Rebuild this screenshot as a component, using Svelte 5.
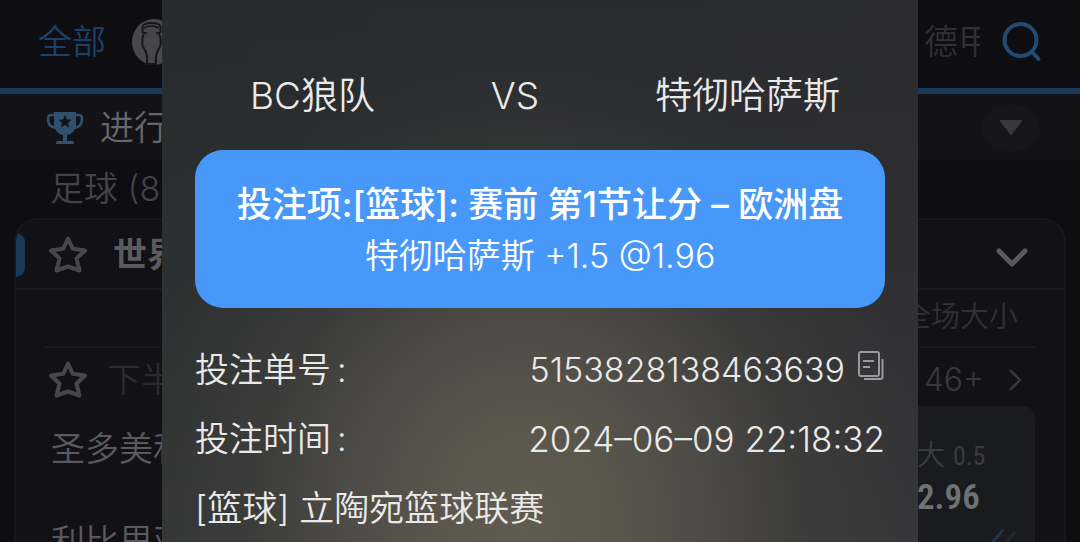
<script>
  const sports = ['全部'];
  const teams = ['BC狼队', 'VS', '特彻哈萨斯'];
  const matchTeams = ['圣多美和', '利比里亚'];
</script>

{#snippet star()}
  <svg class="star" viewBox="0 0 42 42" aria-hidden="true">
    <path d="M21 4.500L25.800 14.800L38 16.500L29.500 24.500L32.500 36.500L21 32.500L9.500 36.500L12.500 24.500L4 16.500L16.200 14.800Z" />
  </svg>
{/snippet}

<main>
  <nav>
    {#each sports as name}
      <a class="tab active" href="#all">{name}</a>
    {/each}
    <a class="cup" href="#euro" aria-label="Euro">
      <svg viewBox="0 0 46 46">
        <ellipse cx="22" cy="23" rx="22" ry="23" fill="#48474c" />
        <path d="M12 14L10.500 13V8Q11 4 19.500 4Q28 4 28.500 8V13L27 14Q30 22 28 28Q23 34 24 45H15Q16 34 11 28Q9 22 12 14Z" fill="#46454c" stroke="#16161b" stroke-width="2" />
        <path d="M12 9Q19.500 5 27 9M12 14H15M24 14H27" fill="none" stroke="#16161b" stroke-width="1.500" />
      </svg>
    </a>
    <a class="tab league" href="#bundesliga">德甲</a>
    <button class="search" aria-label="搜索">
      <svg viewBox="0 0 40 40"><circle cx="18.500" cy="18" r="16" /><path d="M29.500 29.500L36.500 37" /></svg>
    </button>
  </nav>

  <section class="live">
    <svg class="trophy" viewBox="0 0 38 36" aria-hidden="true">
      <path d="M10 5H5Q2 5 2 9Q2 18 12 18M28 5H33Q36 5 36 9Q36 18 26 18" fill="none" stroke="#30506e" stroke-width="2.500" />
      <path d="M8 2H30V14Q30 23 21 25V31H27Q28 31 28 34H10Q10 31 11 31H17V25Q8 23 8 14Z" fill="#30506e" />
      <path d="M19 5L20.900 9.500L25.500 9.800L22 13L23.200 17.500L19 15L14.800 17.500L16 13L12.500 9.800L17.100 9.500Z" fill="#121217" />
    </svg>
    <span>进行</span>
    <button class="fold" aria-label="收起">
      <svg viewBox="0 0 24 18"><path d="M2 2H22L12 15Z" /></svg>
    </button>
  </section>

  <h2>足球 (8</h2>

  <article>
    <header>
      <i></i>
      {@render star()}
      <b>世界</b>
      <button class="chevron" aria-label="展开">
        <svg viewBox="0 0 32 20"><path d="M3 3L16 16L29 3" /></svg>
      </button>
    </header>
    <div class="columns">全场大小</div>
    <div class="match">
      {@render star()}
      <span>下半</span>
      <a href="#more">46+
        <svg viewBox="0 0 14 24"><path d="M2 2L12 12L2 22" /></svg>
      </a>
    </div>
    <div class="odds-row">
      <div class="names">
        {#each matchTeams as team}<span>{team}</span>{/each}
      </div>
      <button class="odds">
        <span>大 <em>0.5</em></span>
        <strong>2.96</strong>
        <svg viewBox="0 0 28 16"><path d="M2 15L14 1" stroke="#1d344d" /><path d="M17 14L26 3" stroke="#20272f" /></svg>
      </button>
    </div>
  </article>

  <div class="slip" role="dialog" aria-label="投注单">
    <div class="versus">
      {#each teams as team}<span>{team}</span>{/each}
    </div>
    <div class="pick">
      <strong>投注项:[篮球]: 赛前 第1节让分 – 欧洲盘</strong>
      <span>特彻哈萨斯 +1.5 @1.96</span>
    </div>
    <dl>
      <div>
        <dt>投注单号<span class="colon">:</span></dt>
        <dd>
          5153828138463639
          <button class="copy" aria-label="复制">
            <svg viewBox="0 0 28 32">
              <rect x="2" y="2" width="20" height="24" rx="2" />
              <path d="M6 11H17M6 17H13M25.500 9V27Q25.500 29 23 29H7" />
            </svg>
          </button>
        </dd>
      </div>
      <div>
        <dt>投注时间<span class="colon">:</span></dt>
        <dd class="time">2024–06–09 22:18:32</dd>
      </div>
    </dl>
    <p>[篮球] 立陶宛篮球联赛</p>
  </div>
</main>

<style>
  :global(body) { margin: 0; background: #0d0d12; }
  * { box-sizing: border-box; }
  main {
    position: relative;
    height: 100vh;
    overflow: hidden;
    background: #0d0d12;
    color: #555559;
    font-family: Inter, "Noto Sans CJK SC", sans-serif;
    font-size: 34px;
    font-weight: 350;
    line-height: 50px;
    white-space: nowrap;
  }
  a { color: inherit; text-decoration: none; }
  button { padding: 0; border: 0; background: none; color: inherit; font: inherit; }
  svg { display: block; flex: none; }

  nav {
    display: flex;
    align-items: center;
    height: 94px;
    padding: 0 38px 4px;
    border-bottom: 6px solid #1b3a59;
  }
  .active { color: #1c4066; }
  .cup { margin-left: 26px; }
  .cup svg { width: 46px; height: 46px; }
  .league { width: 56px; margin-left: auto; overflow: hidden; color: #303035; }
  .search { margin-left: 22px; }
  .search svg { width: 40px; height: 40px; fill: none; stroke: #224b74; stroke-width: 4; stroke-linecap: round; }

  .live {
    display: flex;
    align-items: center;
    gap: 16px;
    height: 66px;
    padding: 2px 40px 0 46px;
    background: #121217;
    color: #66666a;
  }
  .trophy { width: 38px; height: 36px; }
  .fold {
    display: grid;
    place-items: center;
    width: 58px;
    height: 46px;
    margin-left: auto;
    border-radius: 23px;
    background: #15151a;
  }
  .fold svg { width: 24px; height: 18px; fill: #38383c; stroke: #38383c; stroke-width: 2; stroke-linejoin: round; }
  h2 { height: 58px; margin: 0; padding-left: 50px; font: inherit; line-height: 58px; color: #434347; }

  article {
    height: 400px;
    margin: 0 14px;
    overflow: hidden;
    border: 2px solid #17171c;
    border-radius: 24px;
    background: #111116;
  }
  header {
    display: flex;
    align-items: center;
    height: 70px;
    padding: 2px 36px 0 0;
    border-bottom: 2px solid #19191e;
  }
  i { width: 9px; height: 44px; border-radius: 0 10px 10px 0; background: #183957; }
  .star { width: 42px; height: 42px; fill: none; stroke: #47474b; stroke-width: 4; stroke-linejoin: round; }
  header .star { margin-left: 22px; }
  b { margin-left: 24px; font-weight: 700; color: #5b5b5e; }
  .chevron { margin-left: auto; padding-top: 6px; }
  .chevron svg { width: 32px; height: 20px; fill: none; stroke: #5a5a5e; stroke-width: 5; stroke-linecap: round; stroke-linejoin: round; }
  .columns {
    height: 58px;
    margin: 0 28px;
    padding-right: 18px;
    border-bottom: 2px solid #18181d;
    color: #303035;
    font-size: 29px;
    line-height: 54px;
    text-align: right;
  }
  .match {
    display: flex;
    align-items: center;
    height: 58px;
    padding: 6px 42px 0 31px;
    color: #2b2b30;
  }
  .match .star { margin-right: 18px; }
  .match a { display: flex; align-items: center; gap: 24px; margin-left: auto; color: #38383d; font-size: 32px; }
  .match svg:not(.star) { width: 14px; height: 24px; fill: none; stroke: #3d3d42; stroke-width: 2; }
  .odds-row { display: flex; justify-content: space-between; padding: 0 29px 0 35px; }
  .names { display: flex; flex-direction: column; gap: 43px; padding-top: 18px; color: #5a5a5e; }
  .odds {
    display: flex;
    flex-direction: column;
    align-items: flex-start;
    width: 200px;
    height: 180px;
    padding: 28px 0 0 82px;
    border-radius: 12px;
    background: #191b1e;
    color: #3a3c3f;
    font-size: 28px;
    line-height: 42px;
    text-align: left;
  }
  .odds em, .odds strong { font-family: "Roboto Condensed", Roboto, sans-serif; font-style: normal; }
  .odds em { font-size: 26px; font-weight: 400; }
  .odds strong { color: #707173; font-size: 35px; font-weight: 600; line-height: 42px; }
  .odds svg { width: 28px; height: 16px; margin: 10px 0 0 72px; fill: none; stroke-width: 3; }

  .slip {
    position: absolute;
    inset: 0 15%;
    padding: 60px 33px 0;
    background:
      radial-gradient(ellipse 54% 84% at 48% 96%, #615c50 0%, #5a564c 22%, rgba(79, 77, 71, 0.9) 45%, rgba(68, 68, 64, 0.5) 68%, rgba(52, 53, 53, 0) 100%),
      linear-gradient(90deg, rgba(40, 44, 45, 0.5), rgba(46, 44, 50, 0.5)),
      linear-gradient(#282a2e, #2c2e30 25%, #373737 75%, #3c3c3c);
    color: #e9e9e8;
  }
  .versus {
    display: flex;
    justify-content: space-between;
    height: 90px;
    padding: 0 45px 0 55px;
    font-size: 37px;
    line-height: 72px;
  }
  .pick {
    display: flex;
    flex-direction: column;
    align-items: center;
    padding: 28px 0 26px;
    border-radius: 28px;
    background: #4798f8;
    color: #fff;
    line-height: 52px;
  }
  .pick strong { font-size: 35px; font-weight: 500; }
  dl { margin: 27px 0 0; }
  dl div { display: flex; justify-content: space-between; height: 69px; line-height: 70px; }
  dt, dd { margin: 0; }
  .colon { margin-left: 6px; }
  dd { display: flex; gap: 12px; }
  .time { font-size: 35px; }
  .copy { height: 62px; }
  .copy svg { width: 28px; height: 32px; fill: none; stroke: #9a999e; stroke-width: 2; }
  p { margin: 0; font-size: 35px; line-height: 70px; }
</style>
